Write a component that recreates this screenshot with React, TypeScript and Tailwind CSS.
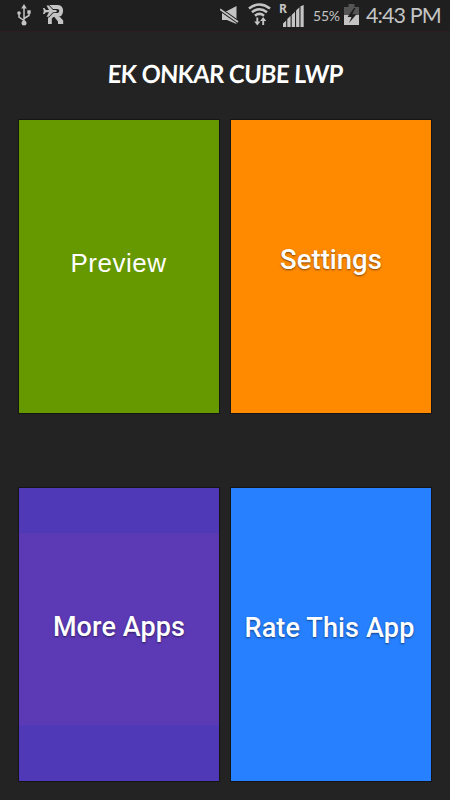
import clsx from "clsx";

const tiles = [
    {
        label: "Preview",
        tile: "bg-[#669900]",
        text: "font-['Liberation_Sans',sans-serif] text-[26px] tracking-[0.5px] pb-[6px] pr-[1px]",
    },
    {
        label: "Settings",
        tile: "bg-[#ff8a00]",
        text: "font-['Roboto',sans-serif] font-medium text-[27.5px] tracking-[0px] pb-[13px] [text-shadow:0_1px_2px_rgba(0,0,0,0.5)]",
    },
    {
        label: "More Apps",
        tile: "bg-[linear-gradient(to_bottom,#4f39b6_45px,#5c39b5_45px,#5c39b5_237px,#4f39b6_237px)]",
        text: "font-['Roboto',sans-serif] font-medium text-[27px] tracking-[0.1px] pb-[15px] [text-shadow:0_1px_2px_rgba(0,0,0,0.5)]",
    },
    {
        label: "Rate This App",
        tile: "bg-[#2680ff]",
        text: "font-['Roboto',sans-serif] font-medium text-[27px] tracking-[0.15px] pb-[13px] pr-[3px] [text-shadow:0_1px_2px_rgba(0,0,0,0.5)]",
    },
];

function UsbIcon() {
    return (
        <svg width="14" height="22" viewBox="0 0 14 22" fill="none" stroke="#c4c4c4" strokeWidth="1.5">
            <path d="M7 4v14M7 16.5l-5-3.500V9.500M7 14.500l5-3V8" />
            <path d="M7 0l2.800 4.500H4.200z" fill="#c4c4c4" stroke="none" />
            <circle cx="2" cy="9" r="1.800" fill="#c4c4c4" stroke="none" />
            <path d="M10.300 6.300h3.400v3.400h-3.400z" fill="#c4c4c4" stroke="none" />
            <circle cx="7" cy="19" r="2.500" fill="#c4c4c4" stroke="none" />
        </svg>
    );
}

function RoamingIcon() {
    return (
        <svg width="21" height="20" viewBox="0 0 21 20" fill="none">
            <path d="M6 2h8c2.800 0 4.200 1.200 4.200 3.700 0 2.500-1.400 4.300-4.200 4.300H9.500L6.900 13v6" stroke="#c4c4c4" strokeWidth="3.800" />
            <path d="M11 11.500h5.500l3.700 4V19H15v-2.500z" fill="#c4c4c4" />
            <path d="M0 3h1.400l1.500 2H6L3.500.6h2.200L10 5h2.200c1 0 1.700.4 1.700 1.100s-.7 1.100-1.700 1.100H10l-4.300 4.500H3.500L6 7.200H2.900L1.400 9H0l.8-2.900z" fill="#c4c4c4" stroke="#1f1f1f" strokeWidth="1.600" paintOrder="stroke" />
        </svg>
    );
}

function MuteIcon() {
    return (
        <svg width="20" height="18" viewBox="0 0 20 18">
            <path d="M2 5h5l9.500-5v18L7 14H2z" fill="#c4c4c4" />
            <path d="M0 3.200l18 12.800" stroke="#1f1f1f" strokeWidth="3.600" />
            <path d="M0 3.200l18 12.800" stroke="#c4c4c4" strokeWidth="1.700" />
        </svg>
    );
}

function WifiIcon() {
    return (
        <svg width="23" height="24" viewBox="0 0 23 24" fill="none" stroke="#c4c4c4">
            <path d="M1 5.500Q11.500-2.500 22 5.500M4 9.200Q11.500 3.300 19 9.200M7 12.700Q11.500 9.200 16 12.700" strokeWidth="2.600" />
            <path d="M9.300 14.500v6M15.200 22v-6" strokeWidth="1.900" />
            <path d="M6.200 18.500h6.200l-3.100 4zM12.100 18h6.200l-3.100-4z" fill="#c4c4c4" stroke="none" />
        </svg>
    );
}

function SignalIcon() {
    return (
        <svg width="21" height="22" viewBox="0 0 21 22" fill="#c4c4c4">
            <path d="M0 22v-3.500l3.200-3V22zM4.300 22v-8l3.300-3.300V22zM8.700 22V10l3.300-3.300V22zM13.100 22V5.500l3.300-3.200V22zM17.500 22V1.200L20.700 0v22z" />
        </svg>
    );
}

function BatteryIcon() {
    return (
        <svg width="15" height="21" viewBox="0 0 15 21">
            <path d="M4.500 0h6v3H15v8H0V3h4.500z" fill="#555" />
            <path d="M0 11h15v10H0z" fill="#c4c4c4" />
            <path d="M10 4L3.500 13h4L5 19l7.500-8.700H8.300L11.500 4z" fill="#1f1f1f" />
        </svg>
    );
}

function StatusBar() {
    return (
        <div className="flex h-8 items-start border-b border-[#2c1e20] bg-[#1f1f1f] font-['Lato',sans-serif] text-[#c4c4c4]">
            <div className="ml-[17px] mt-[4px]"><UsbIcon /></div>
            <div className="ml-[12px] mt-[5px]"><RoamingIcon /></div>
            <div className="ml-auto mt-[6px]"><MuteIcon /></div>
            <div className="ml-[8px] mt-[3px]"><WifiIcon /></div>
            <div className="ml-[8px] mt-[3px] w-[8px] font-['Noto_Sans',sans-serif] text-[12px] leading-[12px] font-bold">R</div>
            <div className="-ml-[4px] mt-[5px]"><SignalIcon /></div>
            <div className="ml-[9px] mt-[8px] w-[31px] text-[14px] leading-4 tracking-[-0.2px] whitespace-nowrap">55%</div>
            <div className="mt-[4px]"><BatteryIcon /></div>
            <div className="ml-[7px] mr-[9px] mt-[3px] w-[75px] text-[21.5px] leading-6 tracking-[-0.9px] whitespace-nowrap">4:43 PM</div>
        </div>
    );
}

export default function App() {
    return (
        <div className="flex h-[800px] w-[450px] flex-col overflow-hidden bg-[#232323]">
            <StatusBar />
            <h1 className="h-[88px] pt-[25px] text-center font-['Lato',sans-serif] text-[25px] leading-8 font-bold tracking-[-0.6px] text-white">
                <span className="inline-block [transform:scaleX(0.945)_skewX(-3deg)]">EK ONKAR CUBE LWP</span>
            </h1>
            <div className="grid grid-cols-[200px_200px] gap-x-3 gap-y-[75px] pl-[19px]">
                {tiles.map((item) => (
                    <button
                        key={item.label}
                        className={clsx(
                            "flex h-[293px] items-center justify-center whitespace-nowrap text-white shadow-[0_0_0_1px_rgba(0,0,0,0.4)]",
                            item.tile
                        )}
                    >
                        <span className={item.text}>{item.label}</span>
                    </button>
                ))}
            </div>
        </div>
    );
}
